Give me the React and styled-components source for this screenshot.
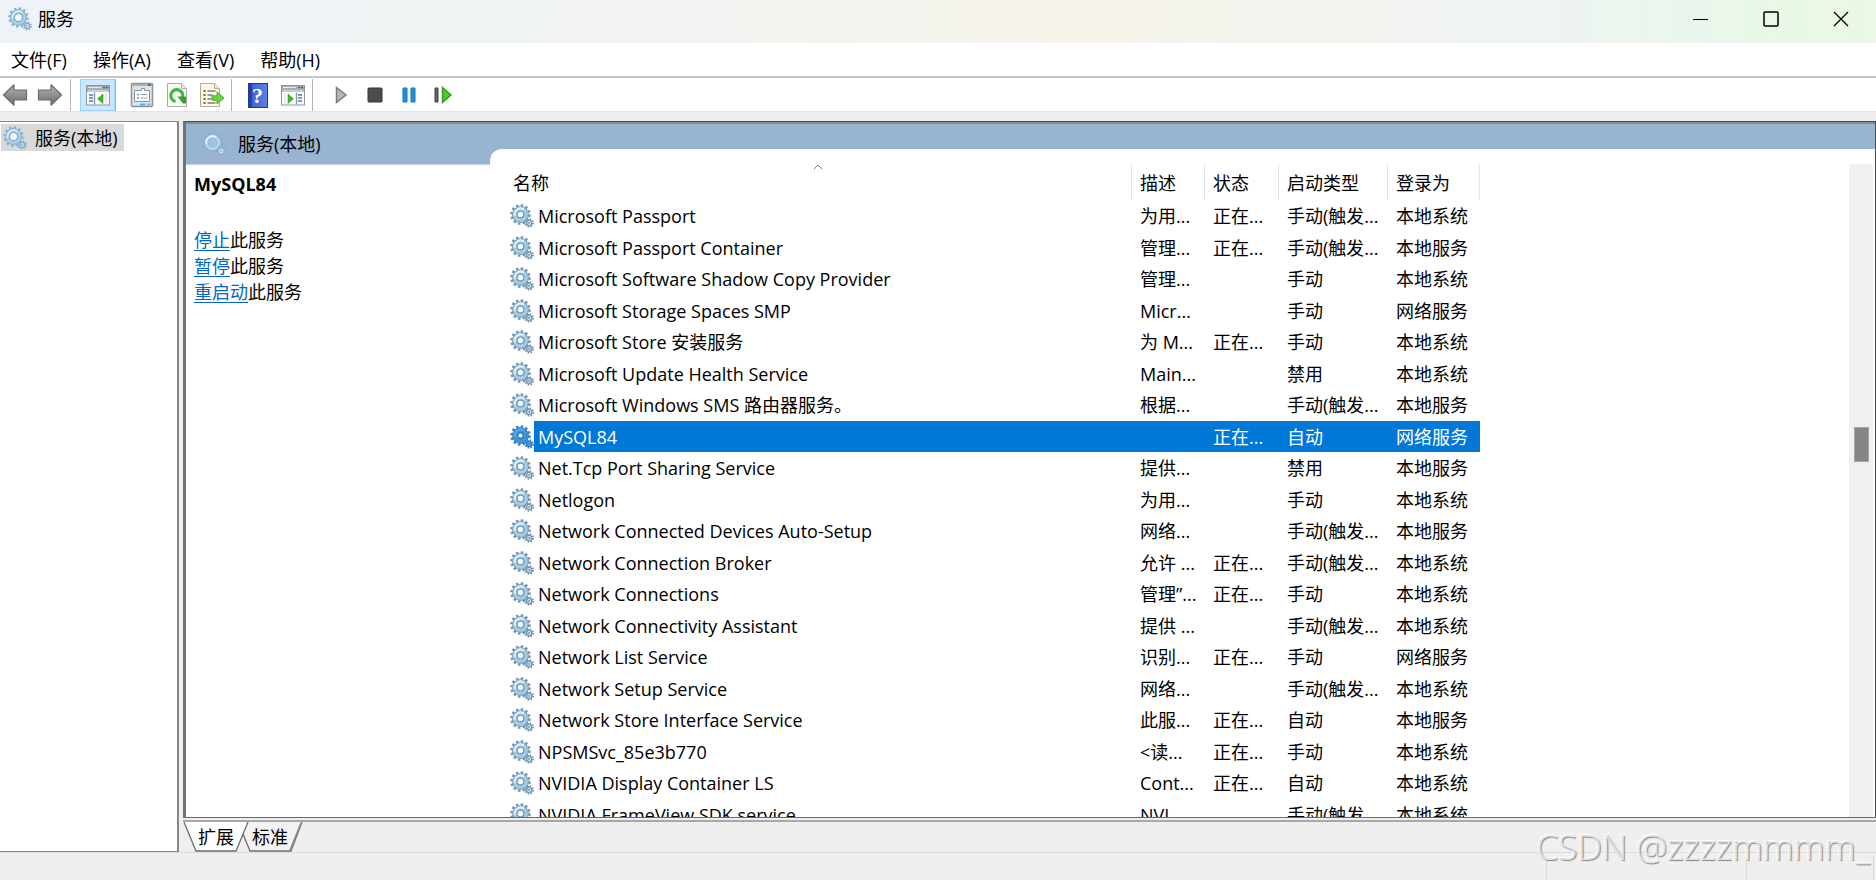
import React, { useState } from 'react';
import styled, { createGlobalStyle, css } from 'styled-components';

const services = [
    { name: 'Microsoft Passport', desc: '为用...', status: '正在...', start: '手动(触发...', logon: '本地系统' },
    { name: 'Microsoft Passport Container', desc: '管理...', status: '正在...', start: '手动(触发...', logon: '本地服务' },
    { name: 'Microsoft Software Shadow Copy Provider', desc: '管理...', status: '', start: '手动', logon: '本地系统' },
    { name: 'Microsoft Storage Spaces SMP', desc: 'Micr...', status: '', start: '手动', logon: '网络服务' },
    { name: 'Microsoft Store 安装服务', desc: '为 M...', status: '正在...', start: '手动', logon: '本地系统' },
    { name: 'Microsoft Update Health Service', desc: 'Main...', status: '', start: '禁用', logon: '本地系统' },
    { name: 'Microsoft Windows SMS 路由器服务。', desc: '根据...', status: '', start: '手动(触发...', logon: '本地服务' },
    { name: 'MySQL84', desc: '', status: '正在...', start: '自动', logon: '网络服务' },
    { name: 'Net.Tcp Port Sharing Service', desc: '提供...', status: '', start: '禁用', logon: '本地服务' },
    { name: 'Netlogon', desc: '为用...', status: '', start: '手动', logon: '本地系统' },
    { name: 'Network Connected Devices Auto-Setup', desc: '网络...', status: '', start: '手动(触发...', logon: '本地服务' },
    { name: 'Network Connection Broker', desc: '允许 ...', status: '正在...', start: '手动(触发...', logon: '本地系统' },
    { name: 'Network Connections', desc: '管理”...', status: '正在...', start: '手动', logon: '本地系统' },
    { name: 'Network Connectivity Assistant', desc: '提供 ...', status: '', start: '手动(触发...', logon: '本地系统' },
    { name: 'Network List Service', desc: '识别...', status: '正在...', start: '手动', logon: '网络服务' },
    { name: 'Network Setup Service', desc: '网络...', status: '', start: '手动(触发...', logon: '本地系统' },
    { name: 'Network Store Interface Service', desc: '此服...', status: '正在...', start: '自动', logon: '本地服务' },
    { name: 'NPSMSvc_85e3b770', desc: '<读...', status: '正在...', start: '手动', logon: '本地系统' },
    { name: 'NVIDIA Display Container LS', desc: 'Cont...', status: '正在...', start: '自动', logon: '本地系统' },
    { name: 'NVIDIA FrameView SDK service', desc: 'NVI...', status: '', start: '手动(触发...', logon: '本地系统' },
];

const gearTones = {
    list: { teeth: '#6f93ae', body: '#a4cce4', edge: '#7399b6', shine: '#d8eefa', hole: '#fff', radius: 3.4 },
    selected: { teeth: '#3a84c2', body: '#3f93d6', edge: '#2a7dc2', shine: '#5aa8e2', hole: '#fff', radius: 2.8 },
    ring: { teeth: '#8fb4ce', body: '#a8d3ea', edge: '#82abc6', shine: '#d4ecf8', hole: '#f4fafd', radius: 4.2 },
    header: { teeth: '#8ca9c5', body: '#b4dcf0', edge: '#94bcd8', shine: '#e4f6fd', hole: '#a6c0dc', radius: 4.6 },
};

const Gear = ({ tone }) => {
    const t = gearTones[tone];
    return (
        <GearSvg viewBox="0 0 24 24" aria-hidden="true">
            <circle cx="10.5" cy="10.5" r="9" fill="none" stroke={t.teeth} strokeWidth="2.6" strokeDasharray="2.36 2.35" />
            <circle cx="10.5" cy="10.5" r="7.9" fill={t.body} stroke={t.edge} strokeWidth="1" />
            <path d="M5 12a5.800 5.800 0 0 1 9-6.300" fill="none" stroke={t.shine} strokeWidth="2.2" />
            <circle cx="10.5" cy="10.5" r={t.radius} fill={t.hole} stroke={t.edge} strokeWidth="1.4" />
            <circle cx="19.2" cy="19" r="3.9" fill="none" stroke={t.teeth} strokeWidth="1.8" strokeDasharray="1.53 1.53" />
            <circle cx="19.2" cy="19" r="2.6" fill={t.shine} stroke={t.edge} strokeWidth="1.4" />
            <circle cx="19.2" cy="19" r="1" fill={t.teeth} />
        </GearSvg>
    );
};

const ArrowIcon = ({ flip }) => (
    <svg width="26" height="24" viewBox="0 0 26 24" aria-hidden="true">
        <defs>
            <linearGradient id="arrow" x1="0" y1="0" x2="0" y2="1">
                <stop offset="0" stopColor="#b4b4b4" />
                <stop offset="1" stopColor="#6c6c6c" />
            </linearGradient>
        </defs>
        <path
            d="M1.500 12L12 1.800V7h12.500v10H12v5.200z"
            transform={flip ? 'translate(26 0) scale(-1 1)' : undefined}
            fill="url(#arrow)" stroke="#6a6a6a" strokeWidth="1.2" strokeLinejoin="round"
        />
    </svg>
);

const PaneIcon = ({ right }) => (
    <svg width="24" height="22" viewBox="0 0 24 22" aria-hidden="true">
        <rect x="0.5" y="1.5" width="23" height="19.5" fill="#fff" stroke="#8d959d" />
        <rect x="1" y="2" width="22" height="6" fill="#a7b0b8" />
        <path d="M2 3.500h13M2 7h20" stroke="#e6eaee" />
        <path d="M17 3.500h2M20 3.500h2" stroke="#4f5963" strokeWidth="1.4" />
        <g transform={right ? 'translate(24 0) scale(-1 1)' : undefined}>
            <path d="M8.500 8.500v12" stroke="#8d959d" strokeWidth="1.4" />
            <path d="M3 11h4M3 14h4M3 17h4" stroke="#3b7fc0" strokeWidth="1.4" />
            <path d="M17 10v9.500l-5.500-4.700z" fill="#44b52c" stroke="#3a9b26" strokeWidth="0.6" />
            <path d="M20 9v11.500" stroke="#d4d9dd" />
        </g>
    </svg>
);

const PropertiesIcon = () => (
    <svg width="24" height="26" viewBox="0 0 24 26" aria-hidden="true">
        <rect x="1.5" y="1.5" width="21" height="23" rx="1" fill="#dfe3e7" stroke="#8a929b" strokeWidth="1.5" />
        <path d="M2 3h20" stroke="#a9b1b9" strokeWidth="2" />
        <path d="M18 3h3" stroke="#4d5660" strokeWidth="1.5" />
        <path d="M4.500 8.500h7v-2h3v2h5v11h-15z" fill="#fff" stroke="#8b949e" />
        <path d="M7 12.500h2M7 16h2" stroke="#31aee0" strokeWidth="1.6" />
        <path d="M10.500 12.500h7M10.500 16h7" stroke="#9aa6b0" strokeWidth="1.2" />
        <path d="M10 22.500h5" stroke="#2cc4f4" strokeWidth="2" />
        <path d="M17 22.500h4" stroke="#aab2ba" strokeWidth="2" />
    </svg>
);

const RefreshIcon = () => (
    <svg width="22" height="26" viewBox="0 0 22 26" aria-hidden="true">
        <path d="M1.500 1.500h14l5 5v18h-19z" fill="#f9f9f9" stroke="#a9a9a9" />
        <path d="M15.500 1.500v5h5" fill="#e4e4e4" stroke="#b0b0b0" />
        <path d="M9.500 19.500A6 6 0 1 1 16.500 15.500" fill="none" stroke="#3fb83c" strokeWidth="3.2" />
        <path d="M11.500 14.500h8.500v7h-3z" fill="#2fa52d" />
    </svg>
);

const ExportIcon = () => (
    <svg width="26" height="26" viewBox="0 0 26 26" aria-hidden="true">
        <path d="M1.500 1.500h14l5 5v18h-19z" fill="#fdf8df" stroke="#b3ae98" />
        <path d="M15.500 1.500v5h5" fill="#eee6c0" stroke="#b3ae98" />
        <path d="M4.500 9h2M4.500 13h2M4.500 17h2M4.500 21h2" stroke="#333" strokeWidth="1.5" />
        <path d="M8.500 9h8M8.500 13h5M8.500 17h4M8.500 21h8" stroke="#7c78a0" strokeWidth="1.5" />
        <path d="M13 13.800h5V10l7 6-7 6v-3.800h-5z" fill="#69d63c" stroke="#44b02a" />
    </svg>
);

const PlayIcon = () => (
    <svg width="16" height="18" viewBox="0 0 16 18" aria-hidden="true">
        <path d="M3.500 1.500v15L13 9z" fill="#b5b5b5" stroke="#7e7e7e" strokeWidth="1.5" />
    </svg>
);

const StopIcon = () => (
    <svg width="16" height="16" viewBox="0 0 16 16" aria-hidden="true">
        <rect x="1" y="1" width="14" height="14" rx="1" fill="#4c4c4c" stroke="#333" />
    </svg>
);

const PauseIcon = () => (
    <svg width="14" height="16" viewBox="0 0 14 16" aria-hidden="true">
        <path d="M1 1h4v14H1zM9 1h4v14H9z" fill="#1f8fdc" stroke="#1878c0" />
    </svg>
);

const RestartIcon = () => (
    <svg width="20" height="18" viewBox="0 0 20 18" aria-hidden="true">
        <path d="M2 2h3v14H2z" fill="#666" stroke="#3f3f3f" />
        <path d="M9.500 1.500v15L18 9z" fill="#4ccb2a" stroke="#2e9c16" strokeWidth="1.4" />
    </svg>
);

const App = () => {
    const [selected, setSelected] = useState('MySQL84');

    return (
        <Window>
            <GlobalStyle />
            <TitleBar>
                <Gear tone="ring" />
                <Title>服务</Title>
                <Caption type="button" aria-label="最小化">
                    <svg width="16" height="16" viewBox="0 0 16 16"><path d="M0 8.500h15" stroke="#000" /></svg>
                </Caption>
                <Caption type="button" aria-label="最大化">
                    <svg width="16" height="16" viewBox="0 0 16 16"><rect x="1" y="1" width="14" height="14" rx="1" fill="none" stroke="#000" strokeWidth="1.5" /></svg>
                </Caption>
                <Caption type="button" aria-label="关闭">
                    <svg width="16" height="16" viewBox="0 0 16 16"><path d="M1 1l14 14M15 1L1 15" stroke="#000" strokeWidth="1.3" /></svg>
                </Caption>
            </TitleBar>
            <MenuBar>
                {['文件(F)', '操作(A)', '查看(V)', '帮助(H)'].map((item) => (
                    <MenuItem type="button" key={item}>{item}</MenuItem>
                ))}
            </MenuBar>
            <Toolbar>
                <ToolGroup>
                    <ToolButton type="button" $width={30} aria-label="后退"><ArrowIcon /></ToolButton>
                    <ToolButton type="button" $width={40} aria-label="前进"><ArrowIcon flip /></ToolButton>
                </ToolGroup>
                <ToolGroup $before={9}>
                    <ToolButton type="button" $active aria-label="显示/隐藏控制台树"><PaneIcon /></ToolButton>
                </ToolGroup>
                <ToolGroup $before={8} $after={2}>
                    <ToolButton type="button" aria-label="属性"><PropertiesIcon /></ToolButton>
                    <ToolButton type="button" aria-label="刷新"><RefreshIcon /></ToolButton>
                    <ToolButton type="button" aria-label="导出列表"><ExportIcon /></ToolButton>
                </ToolGroup>
                <ToolGroup $before={8} $after={2}>
                    <ToolButton type="button" aria-label="帮助"><HelpBox aria-hidden="true">?</HelpBox></ToolButton>
                    <ToolButton type="button" aria-label="显示/隐藏操作窗格"><PaneIcon right /></ToolButton>
                </ToolGroup>
                <ToolGroup $before={11} $last>
                    <ToolButton type="button" $width={34} aria-label="启动服务"><PlayIcon /></ToolButton>
                    <ToolButton type="button" $width={34} aria-label="停止服务"><StopIcon /></ToolButton>
                    <ToolButton type="button" $width={34} aria-label="暂停服务"><PauseIcon /></ToolButton>
                    <ToolButton type="button" $width={34} aria-label="重新启动服务"><RestartIcon /></ToolButton>
                </ToolGroup>
            </Toolbar>
            <Main>
                <Tree>
                    <TreeNode type="button"><Gear tone="ring" /><span>服务(本地)</span></TreeNode>
                </Tree>
                <Right>
                    <Pane>
                        <Side>
                            <SideHeader><Gear tone="header" /><span>服务(本地)</span></SideHeader>
                            <Details>
                                <ServiceName>{selected}</ServiceName>
                                <p><Action href="#stop">停止</Action>此服务</p>
                                <p><Action href="#pause">暂停</Action>此服务</p>
                                <p><Action href="#restart">重启动</Action>此服务</p>
                            </Details>
                        </Side>
                        <ListArea>
                            <ListBody>
                                <ListScroll>
                                    <Table>
                                        <colgroup>
                                            <Col $width={627} />
                                            <Col $width={73} />
                                            <Col $width={74} />
                                            <Col $width={109} />
                                            <Col $width={92} />
                                        </colgroup>
                                        <thead>
                                            <tr>
                                                <Th>
                                                    名称
                                                    <SortMark viewBox="0 0 10 6" aria-hidden="true">
                                                        <path d="M1 5l4-4 4 4" fill="none" stroke="#777" />
                                                    </SortMark>
                                                </Th>
                                                <Th>描述</Th>
                                                <Th>状态</Th>
                                                <Th>启动类型</Th>
                                                <Th>登录为</Th>
                                            </tr>
                                        </thead>
                                        <tbody>
                                            {services.map((s) => (
                                                <Row key={s.name} $selected={s.name === selected} onClick={() => setSelected(s.name)}>
                                                    <NameCell>
                                                        <NameBox>
                                                            <Gear tone={s.name === selected ? 'selected' : 'list'} />
                                                            <span>{s.name}</span>
                                                        </NameBox>
                                                    </NameCell>
                                                    <Td>{s.desc}</Td>
                                                    <Td>{s.status}</Td>
                                                    <Td>{s.start}</Td>
                                                    <Td>{s.logon}</Td>
                                                </Row>
                                            ))}
                                        </tbody>
                                    </Table>
                                </ListScroll>
                                <ScrollTrack><ScrollThumb /></ScrollTrack>
                            </ListBody>
                        </ListArea>
                    </Pane>
                    <Tabs>
                        <Tab type="button" $front>
                            <TabShape viewBox="0 0 66 31">
                                <path d="M1 0l12 29h40L65 0" fill="#fff" stroke="#6e6e6e" strokeWidth="1.3" />
                            </TabShape>
                            <TabLabel>扩展</TabLabel>
                        </Tab>
                        <Tab type="button">
                            <TabShape viewBox="0 0 66 31">
                                <path d="M1 0l12 29h41L65 0" fill="#f2f2f2" stroke="#6e6e6e" strokeWidth="1.3" />
                                <path d="M53 28L64 1" stroke="#8c8c8c" strokeWidth="1.5" />
                            </TabShape>
                            <TabLabel>标准</TabLabel>
                        </Tab>
                    </Tabs>
                </Right>
            </Main>
            <StatusBar>
                <StatusCell $width={200} />
                <StatusCell $width={127} />
                <StatusCell $width={3} />
            </StatusBar>
            <Watermark>CSDN @zzzzmmmm_</Watermark>
        </Window>
    );
};

const GlobalStyle = createGlobalStyle`
    * {
        box-sizing: border-box;
    }
    body {
        margin: 0;
        background: #efefef;
        color: #000;
        font-family: "Open Sans", "Noto Sans CJK SC", sans-serif;
        font-size: 18px;
        line-height: 26px;
    }
    button {
        font: inherit;
        color: inherit;
        border: 0;
        padding: 0;
        background: none;
    }
    p, h2 {
        margin: 0;
    }
    p {
        height: 26px;
    }
    svg {
        display: block;
        flex: none;
    }
`;

const Window = styled.div`
    position: relative;
    display: flex;
    flex-direction: column;
    height: 100vh;
    overflow: hidden;
`;

const GearSvg = styled.svg`
    width: 24px;
    height: 24px;
`;

const TitleBar = styled.header`
    display: flex;
    align-items: center;
    flex: none;
    height: 43px;
    padding: 0 0 5px 8px;
    background: linear-gradient(90deg, #edf3f8 0%, #f1f3f3 30%, #f6f3ea 58%, #eff3f2 80%, #eaf6ec 90%, #e9f8e5 96%, #ecf7e6 100%);
`;

const Title = styled.h1`
    flex: 1;
    margin: 0 0 0 6px;
    font-size: 18px;
    font-weight: 400;
`;

const Caption = styled.button`
    display: flex;
    align-items: center;
    justify-content: center;
    width: 70px;
    height: 38px;
    &:hover {
        background: #dde5e0;
    }
`;

const MenuBar = styled.nav`
    display: flex;
    flex: none;
    gap: 26px;
    height: 35px;
    padding: 3px 11px 0;
    background: #fff;
    border-bottom: 2px solid #c2c6c6;
`;

const MenuItem = styled.button`
    height: 28px;
`;

const Toolbar = styled.div`
    display: flex;
    flex: none;
    height: 34px;
    background: #fff;
    border-bottom: 1px solid #e4e4e4;
`;

const ToolGroup = styled.div`
    display: flex;
    margin: 1px 0 0;
    padding-left: ${(p) => p.$before || 0}px;
    padding-right: ${(p) => p.$after || 0}px;
    border-right: ${(p) => (p.$last ? 0 : '1px solid #b4b4b4')};
`;

const ToolButton = styled.button`
    display: flex;
    align-items: center;
    justify-content: center;
    width: ${(p) => p.$width || 35}px;
    ${(p) => p.$active && css`
        background: #cce8ff;
        border: 1px solid #99d1ff;
    `}
`;

const HelpBox = styled.span`
    width: 20px;
    height: 25px;
    background: linear-gradient(90deg, #2342a8 0 3px, #3d62d8 3px, #5b80e6);
    border: 1px solid #24398c;
    color: #fff;
    font: 700 22px/23px "Liberation Serif", serif;
    text-align: center;
`;

const Main = styled.main`
    display: flex;
    flex: 1;
    gap: 4px;
    min-height: 0;
    padding-top: 9px;
`;

const Tree = styled.aside`
    flex: none;
    width: 179px;
    padding: 2px 1px;
    background: #fff;
    border: 1px solid #828790;
    border-left: 0;
    border-right-width: 2px;
`;

const TreeNode = styled.button`
    display: flex;
    align-items: center;
    gap: 8px;
    height: 27px;
    padding: 0 6px 0 2px;
    background: #d9d9d9;
    white-space: nowrap;
`;

const Right = styled.section`
    display: flex;
    flex: 1;
    flex-direction: column;
    min-width: 0;
`;

const Pane = styled.div`
    display: flex;
    flex: 1;
    min-height: 0;
    background: #99b4d1;
    border: 1px solid #4a4a4a;
    border-left: 3px solid #747474;
    border-bottom-color: #696969;
    box-shadow: inset 0 2px #8d8d8d;
    padding-top: 2px;
`;

const Side = styled.div`
    display: flex;
    flex-direction: column;
    flex: none;
    width: 304px;
`;

const SideHeader = styled.div`
    display: flex;
    align-items: center;
    gap: 12px;
    flex: none;
    height: 41px;
    padding: 0 0 0 16px;
    border-bottom: 1px solid #c4d3e4;
`;

const Details = styled.div`
    flex: 1;
    padding: 6px 8px;
    background: #fff;
`;

const ServiceName = styled.h2`
    margin-bottom: 30px;
    font-size: 18px;
    font-weight: 700;
`;

const Action = styled.a`
    color: #0066cc;
    text-decoration: underline;
    text-underline-offset: 3px;
`;

const ListArea = styled.div`
    display: flex;
    flex: 1;
    min-width: 0;
    padding-top: 25px;
`;

const ListBody = styled.div`
    display: flex;
    flex: 1;
    min-width: 0;
    padding: 15px 2px 0 15px;
    overflow: hidden;
    background: #fff;
    border-top-left-radius: 12px;
`;

const ListScroll = styled.div`
    flex: 1;
    min-width: 0;
    overflow: hidden;
`;

const Table = styled.table`
    width: 975px;
    table-layout: fixed;
    border-collapse: separate;
    border-spacing: 0;
`;

const Col = styled.col`
    width: ${(p) => p.$width}px;
`;

const Th = styled.th`
    position: relative;
    height: 36px;
    padding: 1px 0 0 8px;
    border-right: 1px solid #e5e5e5;
    font-weight: 400;
    text-align: left;
    white-space: nowrap;
`;

const SortMark = styled.svg`
    position: absolute;
    top: 0;
    left: calc(50% - 5px);
    width: 10px;
    height: 6px;
`;

const Td = styled.td`
    padding: 0 0 0 8px;
    overflow: hidden;
    white-space: nowrap;
`;

const NameCell = styled(Td)`
    padding-left: 5px;
`;

const NameBox = styled.div`
    display: flex;
    align-items: center;
    gap: 4px;
`;

const Row = styled.tr`
    height: 32px;
    line-height: 24px;
    &:nth-child(even) {
        height: 31px;
    }
    ${(p) => p.$selected && css`
        color: #fff;
        ${Td} {
            background: #0078d7;
        }
        ${NameCell} {
            background: linear-gradient(90deg, #fff 29px, #0078d7 29px);
        }
    `}
`;

const ScrollTrack = styled.div`
    flex: none;
    width: 24px;
    padding: 263px 4px 0 5px;
    background: #f0f0f0;
`;

const ScrollThumb = styled.div`
    height: 35px;
    background: #858585;
    border: 1px solid #a6a6a6;
`;

const Tabs = styled.div`
    display: flex;
    flex: none;
    height: 32px;
    margin-top: 2px;
    border-top: 2px solid #a8a8a8;
`;

const Tab = styled.button`
    position: relative;
    z-index: ${(p) => (p.$front ? 1 : 0)};
    width: 66px;
    height: 29px;
    margin-right: -12px;
`;

const TabShape = styled.svg`
    position: absolute;
    top: 0;
    left: 0;
    width: 66px;
    height: 31px;
`;

const TabLabel = styled.span`
    position: relative;
`;

const StatusBar = styled.footer`
    display: flex;
    justify-content: flex-end;
    flex: none;
    height: 28px;
    padding-top: 3px;
    border-top: 1px solid #dcdcdc;
`;

const StatusCell = styled.div`
    width: ${(p) => p.$width}px;
    border-left: 1px solid #dadada;
`;

const Watermark = styled.div`
    position: absolute;
    right: 6px;
    bottom: 10px;
    color: #e2e2e2;
    font: 300 35px/46px "Open Sans", sans-serif;
    text-shadow: 1px 1px 1px #808080, -1px -1px 1px #fff;
    pointer-events: none;
`;

export default App;
